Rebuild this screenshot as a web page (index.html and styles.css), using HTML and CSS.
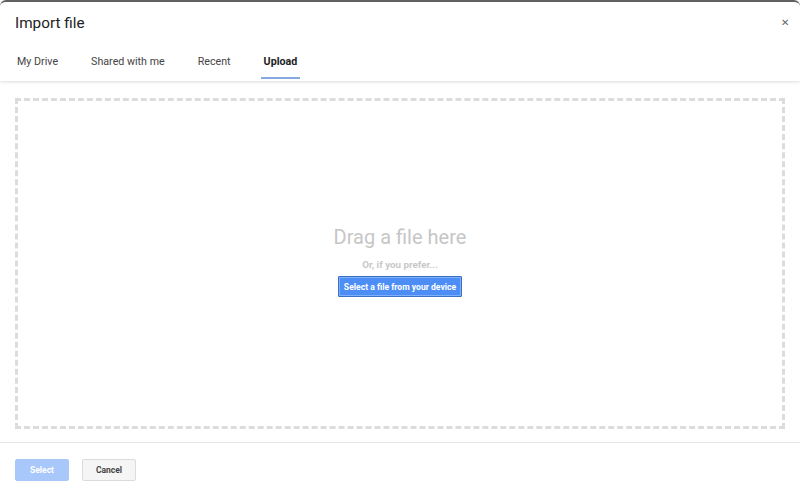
FILE: index.html
```html
<!DOCTYPE html>
<html>
<head>
<meta charset="utf-8">
<link rel="stylesheet" href="styles.css">
</head>
<body>
<div class="dialog">
  <header class="head">
    <div class="titlebar">
      <h1 class="title">Import file</h1>
      <span class="close">&#x2715;</span>
    </div>
    <nav class="tabs">
      <span class="tab">My Drive</span>
      <span class="tab">Shared with me</span>
      <span class="tab">Recent</span>
      <span class="tab active">Upload</span>
    </nav>
  </header>
  <main class="body">
    <div class="drop">
      <div class="drag">Drag a file here</div>
      <div class="prefer">Or, if you prefer...</div>
      <button class="pick">Select a file from your device</button>
    </div>
  </main>
  <footer class="foot">
    <button class="btn primary">Select</button>
    <button class="btn">Cancel</button>
  </footer>
</div>
</body>
</html>
```

FILE: styles.css
```css
* { box-sizing: border-box; }
html, body { margin: 0; padding: 0; background: #fff; }
body { font-family: Roboto, Arial, sans-serif; width: 800px; height: 496px; overflow: hidden; }
.dialog {
  height: 496px;
  border-top: 2px solid #626262;
  border-radius: 6px 6px 0 0;
  display: flex;
  flex-direction: column;
}
.head {
  height: 79px;
  box-shadow: 0 1px 3px rgba(0,0,0,0.14);
  position: relative;
  z-index: 1;
  display: flex;
  flex-direction: column;
}
.titlebar {
  display: flex;
  justify-content: space-between;
  align-items: center;
  padding: 11px 11px 0 15px;
}
.title {
  margin: 0;
  font-size: 15.3px;
  font-weight: 400;
  color: #222;
  line-height: 20px;
}
.close { font-size: 10px; color: #666; margin-top: -1px; }
.tabs {
  display: flex;
  gap: 33px;
  padding: 0 0 0 17px;
  margin-top: 20px;
}
.tab {
  font-size: 10.7px;
  color: #444;
  height: 26px;
  line-height: 16px;
  padding-top: 1px;
  border-bottom: 2px solid transparent;
}
.tab.active {
  font-weight: 700;
  color: #222;
  border-bottom-color: #88a9df;
  padding: 1px 3px 0;
  margin-left: -3px;
  margin-right: -3px;
}
.body {
  flex: 1;
  padding: 17px 15px 0 15px;
  height: 363px;
}
.drop {
  height: 331px;
  border: 3px dashed #dcdcdc;
  display: flex;
  flex-direction: column;
  align-items: center;
  padding-top: 124px;
}
.drag {
  font-size: 20px;
  color: #c6c6c6;
  line-height: 24px;
}
.prefer {
  margin-top: 10px;
  font-size: 9.8px;
  font-weight: 700;
  color: #c8c8c8;
  line-height: 12px;
}
.pick {
  margin-top: 5px;
  font-family: Roboto, Arial, sans-serif;
  font-size: 8.6px;
  font-weight: 700;
  color: #fff;
  background: #4d8ef6;
  border: 1px solid #3d6fc2;
  box-shadow: inset 0 0 0 1px #7fb0fb;
  width: 124px;
  height: 21px;
  padding: 0;
  border-radius: 1px;
}
.foot {
  border-top: 1px solid #e5e5e5;
  height: 54px;
  display: flex;
  align-items: flex-start;
  gap: 13px;
  padding: 16px 15px 0;
}
.btn {
  font-family: Roboto, Arial, sans-serif;
  font-size: 8.5px;
  font-weight: 700;
  width: 54px;
  height: 22px;
  padding: 0;
  border-radius: 2px;
  background: #f5f5f5;
  border: 1px solid #dcdcdc;
  color: #444;
}
.btn.primary {
  background: #a8c8fb;
  border-color: #a8c8fb;
  color: #fff;
}
```
